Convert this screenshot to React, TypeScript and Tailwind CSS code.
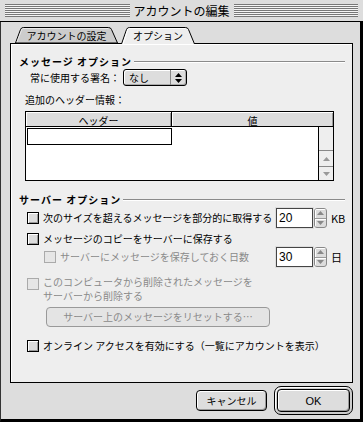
import React from "react";

const FONT = "font-['Noto_Sans_CJK_JP','Noto_Sans',sans-serif]";

function Stripes() {
  return (
    <div className="flex-1 h-[13px] bg-[repeating-linear-gradient(to_bottom,#777_0px,#777_1px,#f4f4f4_1px,#f4f4f4_2px)]" />
  );
}

function Checkbox({ disabled = false }: { disabled?: boolean }) {
  return (
    <div
      className={
        disabled
          ? "w-[12px] h-[12px] shrink-0 border border-[#aaa] bg-[#e6e6e6]"
          : "w-[12px] h-[12px] shrink-0 border border-black bg-[#dcdcdc] shadow-[inset_1px_1px_0_#fff,inset_-1px_-1px_0_#999]"
      }
    />
  );
}

function Tri({ up, color }: { up: boolean; color: string }) {
  return (
    <svg width="7" height="4" viewBox="0 0 7 4">
      <polygon points={up ? "3.5,0 7,4 0,4" : "0,0 7,0 3.5,4"} fill={color} />
    </svg>
  );
}

function Field({ value, unit }: { value: string; unit: string }) {
  return (
    <div className="flex items-center h-[20px]">
      <div className="w-[37px] h-[20px] border border-[#444] bg-white shadow-[0_0_0_1px_#ddd] flex items-center pl-[2px] text-[12px] text-black font-['Liberation_Sans',sans-serif]">
        {value}
      </div>
      <div className="w-[13px] h-[20px] ml-[1px] border border-[#888] rounded-[3px] bg-[#dcdcdc] flex flex-col overflow-hidden">
        <div className="flex-1 flex items-center justify-center border-b border-[#999] shadow-[inset_1px_1px_0_#fff]">
          <Tri up color="#888" />
        </div>
        <div className="flex-1 flex items-center justify-center shadow-[inset_1px_1px_0_#fff]">
          <Tri up={false} color="#888" />
        </div>
      </div>
      <div className="w-[14px] ml-[4px] text-[11px] text-black">{unit}</div>
    </div>
  );
}

function SectionHeader({ text }: { text: string }) {
  return (
    <div className="flex items-center h-[12px] leading-[12px]">
      <span className="font-bold text-black whitespace-nowrap tracking-[1px]">{text}</span>
      <div className="flex-1 ml-[2px] h-[2px] border-t border-[#8a8a8a] border-b border-b-white" />
    </div>
  );
}

export default function App() {
  return (
    <div className={`w-[363px] h-[422px] bg-[#dddddd] flex flex-col text-[10px] leading-[12px] text-black ${FONT}`}>
      {/* title bar */}
      <div className="h-[22px] shrink-0 flex items-center pl-[5px] pr-[5px] border-b border-black">
        <Stripes />
        <div className="px-[4px] text-[12px] leading-[14px] text-black whitespace-nowrap">アカウントの編集</div>
        <Stripes />
      </div>

      {/* body */}
      <div className="flex-1 flex flex-col border-l border-[#333] border-r-[3px] border-b-[3px] border-r-black border-b-black pl-[9px] pt-[5px]">
        {/* tabs */}
        <div className="flex items-end h-[16px] ml-[5px] relative z-10">
          <div className="relative w-[103px] h-[16px] flex items-center justify-center">
            <svg className="absolute inset-0" width="103" height="16" viewBox="0 0 103 16">
              <path d="M0.5,16 L5.5,2.5 Q6.2,0.5 8.5,0.5 L93.5,0.5 Q95.8,0.5 96.5,2.5 L102.5,16 Z" fill="#cccccc" stroke="#000" />
              <path d="M2,15 L6.8,2.5 Q7.2,1.5 8.5,1.5 L93,1.5" fill="none" stroke="#e8e8e8" />
            </svg>
            <span className="relative pt-[1px]">アカウントの設定</span>
          </div>
          <div className="relative w-[74px] h-[17px] ml-[3px] -mb-px flex items-center justify-center">
            <svg className="absolute inset-0" width="74" height="17" viewBox="0 0 74 17">
              <path d="M0.5,17 L5.5,2.5 Q6.2,0.5 8.5,0.5 L64.5,0.5 Q66.8,0.5 67.5,2.5 L73.5,17" fill="#eeeeee" stroke="#000" />
              <path d="M2,17 L6.8,2.5 Q7.2,1.5 8.5,1.5 L64,1.5" fill="none" stroke="#fff" />
            </svg>
            <span className="relative">オプション</span>
          </div>
        </div>

        {/* panel */}
        <div className="w-[343px] h-[340px] border border-black bg-[#eeeeee] shadow-[inset_1px_1px_0_#fff] flex flex-col pl-[8px] pr-[7px]">
          <div className="mt-[12px]">
            <SectionHeader text="メッセージ オプション" />
          </div>

          <div className="mt-[1px] h-[17px] flex items-center ml-[11px]">
            <span className="w-[93px] whitespace-nowrap">常に使用する署名：</span>
            <div className="w-[64px] h-[17px] rounded-[3px] border border-black bg-[#dddddd] shadow-[inset_1px_1px_0_#fff,inset_-1px_-1px_0_#aaa] flex items-center">
              <span className="flex-1 pl-[5px]">なし</span>
              <div className="w-[16px] h-full border-l border-[#888] flex flex-col items-center justify-center gap-[2px]">
                <Tri up color="#000" />
                <Tri up={false} color="#000" />
              </div>
            </div>
          </div>

          <div className="mt-[8px] h-[12px] ml-[6px] whitespace-nowrap">追加のヘッダー情報：</div>

          {/* table */}
          <div className="mt-[5px] ml-[6px] w-[309px] h-[70px] border border-black flex flex-col bg-white">
            <div className="h-[15px] shrink-0 flex border-b border-black">
              <div className="w-[145px] bg-[#dddddd] shadow-[inset_1px_1px_0_#fff,inset_-1px_0_0_#999] flex items-end justify-center leading-[11px]">ヘッダー</div>
              <div className="w-px bg-black" />
              <div className="flex-1 bg-[#dddddd] shadow-[inset_1px_1px_0_#fff,inset_-1px_0_0_#999] flex items-end justify-center leading-[11px]">値</div>
            </div>
            <div className="flex-1 flex">
              <div className="flex-1 bg-white">
                <div className="ml-[1px] mt-[1px] w-[145px] h-[17px] border border-black bg-white" />
              </div>
              <div className="w-[15px] border-l border-black bg-[#eeeeee] flex flex-col">
                <div className="flex-1" />
                <div className="h-[16px] border-t border-[#888] flex items-center justify-center">
                  <Tri up color="#999" />
                </div>
                <div className="h-[14px] border-t border-[#888] flex items-center justify-center">
                  <Tri up={false} color="#999" />
                </div>
              </div>
            </div>
          </div>

          <div className="mt-[13px]">
            <SectionHeader text="サーバー オプション" />
          </div>

          <div className="mt-[2px] h-[20px] flex items-center">
            <div className="flex-1 flex items-center ml-[8px] gap-[4px]">
              <Checkbox />
              <span className="whitespace-nowrap">次のサイズを超えるメッセージを部分的に取得する</span>
            </div>
            <Field value="20" unit="KB" />
          </div>

          <div className="mt-[4px] h-[14px] flex items-center ml-[8px] gap-[4px]">
            <Checkbox />
            <span className="whitespace-nowrap">メッセージのコピーをサーバーに保存する</span>
          </div>

          <div className="mt-[1px] h-[20px] flex items-center">
            <div className="flex-1 flex items-center ml-[25px] gap-[4px] text-[#8a8a8a]">
              <Checkbox disabled />
              <span className="whitespace-nowrap">サーバーにメッセージを保存しておく日数</span>
            </div>
            <Field value="30" unit="日" />
          </div>

          <div className="mt-[8px] h-[28px] flex items-start ml-[8px] gap-[4px] text-[#8a8a8a]">
            <div className="mt-[3px]">
              <Checkbox disabled />
            </div>
            <div className="leading-[14px]">
              <div className="h-[14px]">このコンピュータから削除されたメッセージを</div>
              <div className="h-[14px]">サーバーから削除する</div>
            </div>
          </div>

          <div className="mt-[4px] ml-[27px] w-[224px] h-[20px] rounded-[4px] border border-[#999] bg-[#e4e4e4] flex items-center justify-center text-[#8a8a8a] whitespace-nowrap">
            サーバー上のメッセージをリセットする…
          </div>

          <div className="mt-[12px] h-[14px] flex items-center ml-[8px] gap-[4px]">
            <Checkbox />
            <span className="whitespace-nowrap">オンライン アクセスを有効にする（一覧にアカウントを表示）</span>
          </div>
        </div>

        {/* buttons */}
        <div className="w-[343px] mt-[3px] h-[29px] flex items-center justify-end">
          <div className="w-[71px] h-[21px] rounded-[4px] border border-black bg-[#dddddd] shadow-[inset_1px_1px_0_#fff,inset_-1px_-1px_0_#999] flex items-center justify-center">
            キャンセル
          </div>
          <div className="ml-[7px] w-[79px] h-[29px] rounded-[7px] border border-black bg-[#cccccc] shadow-[inset_1px_1px_0_#fff] p-[2px] flex">
            <div className="flex-1 rounded-[4px] border border-black bg-[#dddddd] shadow-[inset_1px_1px_0_#fff,inset_-1px_-1px_0_#999] flex items-center justify-center text-[11px] font-['Liberation_Sans',sans-serif]">
              OK
            </div>
          </div>
        </div>
      </div>
    </div>
  );
}
